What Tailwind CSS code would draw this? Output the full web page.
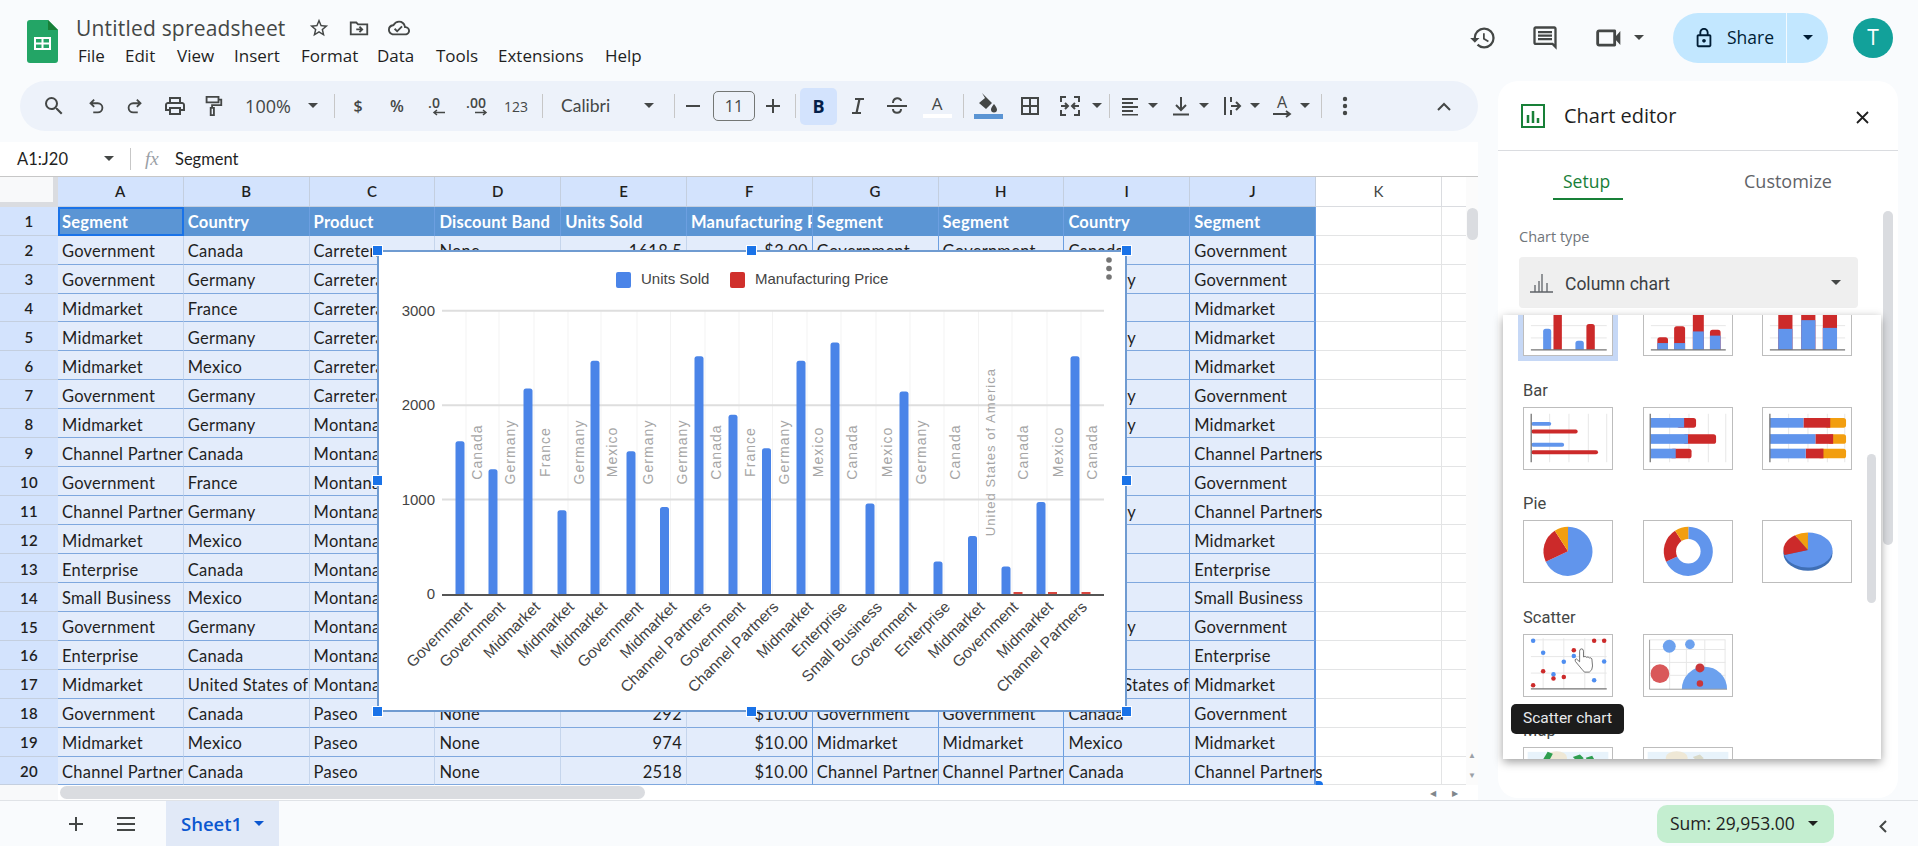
<!DOCTYPE html>
<html lang="en">
<head>
<meta charset="UTF-8">
<title>Untitled spreadsheet</title>
<script src="https://cdn.jsdelivr.net/npm/@tailwindcss/browser@4"></script>
</head>
<body class="font-['Open_Sans',sans-serif]">
<div class="relative w-[1920px] h-[846px] overflow-hidden bg-[#f9fbfd] border-r-2 border-white flex flex-col text-[#444746]">

  <!-- title bar -->
  <header class="h-[81px] shrink-0 flex items-start">
    <svg class="ml-[27px] mt-[20px] shrink-0" width="31" height="43" viewBox="0 0 31 43">
      <path d="M3 0h18l10 10v30a3 3 0 0 1-3 3H3a3 3 0 0 1-3-3V3a3 3 0 0 1 3-3z" fill="#23a566"/>
      <path d="M21 0l10 10H21z" fill="#188038"/>
      <path d="M7 17h17v13H7z M9 19v3.5h5.5V19z M16.5 19v3.5H22V19z M9 24.5V28h5.5v-3.5z M16.5 24.5V28H22v-3.5z" fill="#fff" fill-rule="evenodd"/>
    </svg>
    <div class="ml-[18px] mt-[14px]">
      <div class="flex items-center h-[28px]">
        <span class="text-[21px] tracking-[0.2px] leading-[28px] w-[210px] whitespace-nowrap">Untitled spreadsheet</span>
        <svg class="ml-[22px]" width="22" height="22" viewBox="0 0 24 24" fill="#444746"><path d="M22 9.24l-7.19-.62L12 2 9.19 8.63 2 9.24l5.46 4.73L5.82 21 12 17.27 18.18 21l-1.63-7.03L22 9.24zM12 15.4l-3.76 2.27 1-4.28-3.32-2.88 4.38-.38L12 6.1l1.71 4.04 4.38.38-3.32 2.88 1 4.28L12 15.4z"/></svg>
        <svg class="ml-[17px]" width="24" height="22" viewBox="0 0 24 24" fill="none" stroke="#444746" stroke-width="2"><path d="M3 6h6l2 2h10v11H3z"/><path d="M9 13.500h6M12.500 10.500l3 3-3 3"/></svg>
        <svg class="ml-[16px]" width="24" height="22" viewBox="0 0 24 24" fill="#444746"><path d="M19.350 10.040A7.490 7.490 0 0 0 12 4C9.110 4 6.600 5.640 5.350 8.040A5.994 5.994 0 0 0 0 14c0 3.310 2.690 6 6 6h13c2.760 0 5-2.240 5-5 0-2.640-2.050-4.780-4.650-4.960zM19 18H6c-2.210 0-4-1.790-4-4 0-2.050 1.530-3.760 3.560-3.970l1.070-.11.5-.95A5.469 5.469 0 0 1 12 6c2.620 0 4.880 1.860 5.390 4.430l.3 1.500 1.530.11A2.980 2.980 0 0 1 22 15c0 1.650-1.350 3-3 3zm-9-3.820l-2.090-2.090L6.500 13.500 10 17l6.010-6.010-1.410-1.410z"/></svg>
      </div>
      <nav class="flex gap-[20px] ml-[2px] mt-[2px] text-[17px] leading-[24px] text-[#1f1f1f] whitespace-nowrap">
        <span class="w-[27px]">File</span><span class="w-[32px]">Edit</span><span class="w-[37px]">View</span><span class="w-[47px]">Insert</span><span class="w-[56px]">Format</span><span class="w-[39px]">Data</span><span class="w-[42px]">Tools</span><span class="w-[87px]">Extensions</span><span class="w-[36px]">Help</span>
      </nav>
    </div>
    <div class="ml-auto flex items-center h-[75px] pr-[25px]">
      <svg width="28" height="28" viewBox="0 0 24 24" fill="#444746"><path d="M13 3a9 9 0 0 0-9 9H1l3.890 3.890.07.14L9 12H6c0-3.870 3.130-7 7-7s7 3.130 7 7-3.130 7-7 7c-1.930 0-3.680-.79-4.940-2.060l-1.420 1.420A8.954 8.954 0 0 0 13 21a9 9 0 0 0 0-18zm-1 5v5l4.280 2.540.72-1.210-3.500-2.080V8H12z"/></svg>
      <svg class="ml-[34px]" width="28" height="28" viewBox="0 0 24 24" fill="#444746"><path d="M21.990 4c0-1.100-.89-2-1.990-2H4c-1.100 0-2 .9-2 2v12c0 1.100.9 2 2 2h14l4 4-.01-18zM20 4v13.170L18.830 16H4V4h16zM6 12h12v2H6zm0-3h12v2H6zm0-3h12v2H6z"/></svg>
      <svg class="ml-[33px]" width="34" height="34" viewBox="0 0 24 24" fill="#444746"><path d="M17 10.500V7c0-.55-.45-1-1-1H5C3.900 6 3 6.900 3 8v8c0 1.100.9 2 2 2h11c.55 0 1-.45 1-1v-3.500l3 3.500v-10l-3 3.500zM15 16H5V8h10v8z"/></svg>
      <svg class="ml-[8px]" width="10" height="6" viewBox="0 0 10 6" fill="#444746"><path d="M0 0h10L5 5z"/></svg>
      <div class="ml-[29px] w-[155px] h-[50px] rounded-full bg-[#c2e7ff] flex items-center text-[#001d35]">
        <svg class="ml-[20px]" width="22" height="22" viewBox="0 0 24 24" fill="#001d35"><path d="M18 8h-1V6c0-2.760-2.240-5-5-5S7 3.240 7 6v2H6c-1.100 0-2 .9-2 2v10c0 1.100.9 2 2 2h12c1.100 0 2-.9 2-2V10c0-1.100-.9-2-2-2zM9 6c0-1.660 1.340-3 3-3s3 1.340 3 3v2H9V6zm9 14H6V10h12v10zm-6-3c1.100 0 2-.9 2-2s-.9-2-2-2-2 .9-2 2 .9 2 2 2z"/></svg>
        <span class="ml-[12px] w-[49px] text-[17.500px] font-medium whitespace-nowrap">Share</span>
        <span class="ml-[10px] w-px h-[50px] bg-white/80"></span>
        <svg class="ml-[16px]" width="10" height="6" viewBox="0 0 10 6" fill="#001d35"><path d="M0 0h10L5 5z"/></svg>
      </div>
      <div class="ml-[25px] w-[40px] h-[40px] rounded-full bg-[#12a19a] text-white flex items-center justify-center text-[21px]">T</div>
    </div>
  </header>

  <!-- main area -->
  <div class="flex flex-1 min-h-0">
    <div class="w-[1478px] shrink-0 flex flex-col">
      <!-- toolbar -->
      <div class="ml-[20px] h-[50px] rounded-full bg-[#edf2fa] flex items-center shrink-0 text-[#444746]">
        <span class="ml-[14px] w-[40px] flex justify-center"><svg width="24" height="24" viewBox="0 0 24 24" fill="#444746"><path d="M15.500 14h-.79l-.28-.27A6.471 6.471 0 0 0 16 9.500 6.500 6.500 0 1 0 9.500 16c1.610 0 3.090-.59 4.230-1.570l.27.28v.79l5 4.990L20.490 19l-4.990-5zm-6 0C7.010 14 5 11.990 5 9.500S7.010 5 9.500 5 14 7.010 14 9.500 11.990 14 9.500 14z"/></svg></span>
        <span class="w-[44px] flex justify-center"><svg width="22" height="22" viewBox="0 0 24 24" fill="none" stroke="#444746" stroke-width="2"><path d="M10 5 6 9l4 4M6 9h8a5 5 0 0 1 0 10H9"/></svg></span>
        <span class="w-[34px] flex justify-center"><svg width="22" height="22" viewBox="0 0 24 24" fill="none" stroke="#444746" stroke-width="2"><path d="M14 5l4 4-4 4M18 9h-8a5 5 0 0 0 0 10h5"/></svg></span>
        <span class="w-[46px] flex justify-center"><svg width="24" height="24" viewBox="0 0 24 24" fill="#444746"><path d="M19 8h-1V3H6v5H5c-1.660 0-3 1.340-3 3v6h4v4h12v-4h4v-6c0-1.660-1.340-3-3-3zM8 5h8v3H8V5zm8 12v2H8v-4h8v2zm2-2v-2H6v2H4v-4c0-.55.45-1 1-1h14c.55 0 1 .45 1 1v4h-2z"/></svg></span>
        <span class="w-[30px] flex justify-center"><svg width="22" height="24" viewBox="0 0 24 24" fill="none" stroke="#444746" stroke-width="2"><path d="M5 2h13v6H5zM18 5h3v6H11v3M9.500 14h3.500v8H9.500z"/></svg></span>
        <span class="w-[80px] text-center text-[18px]">100%</span>
        <svg width="10" height="6" viewBox="0 0 10 6" fill="#444746"><path d="M0 0h10L5 5z"/></svg>
        <span class="ml-[16px] w-px h-[24px] bg-[#c7c7c7]"></span>
        <span class="w-[46px] text-center text-[16px] font-semibold">$</span>
        <span class="w-[32px] text-center text-[16px] font-semibold">%</span>
        <span class="w-[42px] flex flex-col items-center text-[14px] font-semibold leading-[13px]">.0<svg width="14" height="7" viewBox="0 0 14 7" class="ml-[10px]" fill="none" stroke="#444746" stroke-width="1.500"><path d="M13 3.500H2M5 1 2 3.500 5 6"/></svg></span>
        <span class="w-[42px] flex flex-col items-center text-[14px] font-semibold leading-[13px]">.00<svg width="14" height="7" viewBox="0 0 14 7" class="ml-[10px]" fill="none" stroke="#444746" stroke-width="1.500"><path d="M1 3.500h11M9 1l3 2.500L9 6"/></svg></span>
        <span class="w-[38px] text-center text-[14px]">123</span>
        <span class="ml-[7px] w-px h-[24px] bg-[#c7c7c7]"></span>
        <span class="ml-[18px] w-[83px] text-[17.500px] font-['Lato',sans-serif]">Calibri</span>
        <svg width="10" height="6" viewBox="0 0 10 6" fill="#444746"><path d="M0 0h10L5 5z"/></svg>
        <span class="ml-[20px] w-px h-[24px] bg-[#c7c7c7]"></span>
        <span class="w-[36px] flex justify-center"><span class="w-[14px] h-[2px] bg-[#444746]"></span></span>
        <span class="ml-[2px] w-[42px] h-[30px] rounded-[5px] border border-[#747775] flex items-center justify-center text-[16px]">11</span>
        <span class="w-[36px] flex justify-center"><svg width="16" height="16" viewBox="0 0 16 16" fill="#444746"><path d="M7 1h2v6h6v2H9v6H7V9H1V7h6z"/></svg></span>
        <span class="ml-[4px] w-px h-[24px] bg-[#c7c7c7]"></span>
        <span class="ml-[4px] w-[37px] h-[37px] rounded-[5px] bg-[#d3e3fd] flex items-center justify-center text-[18px] font-bold text-[#041e49]">B</span>
        <span class="w-[42px] flex justify-center"><svg width="20" height="20" viewBox="0 0 20 20" fill="none" stroke="#444746" stroke-width="2.200"><path d="M7 3h9M4 17h9M11.500 3l-3 14"/></svg></span>
        <span class="w-[36px] flex justify-center"><svg width="22" height="22" viewBox="0 0 22 22" fill="none" stroke="#444746" stroke-width="2"><path d="M1 11h20M7 8c0-6 8-6 8-2M7 14c0 5 8 5 8 0"/></svg></span>
        <span class="w-[44px] flex flex-col items-center text-[17px] leading-[20px]">A<span class="w-[29px] h-[4px] bg-white"></span></span>
        <span class="ml-[4px] w-px h-[24px] bg-[#c7c7c7]"></span>
        <span class="w-[48px] flex flex-col items-center"><svg width="22" height="20" viewBox="0 0 22 20" fill="#444746"><path d="M5 0l10 10-6 6-7-6 6-5zM17 11s3 3.500 3 5.500a3 3 0 0 1-6 0C14 14.500 17 11 17 11z"/></svg><span class="w-[29px] h-[5px] bg-[#5a94d3] mt-[1px]"></span></span>
        <span class="w-[36px] flex justify-center"><svg width="20" height="20" viewBox="0 0 20 20" fill="none" stroke="#444746" stroke-width="2"><path d="M2 2h16v16H2zM10 2v16M2 10h16"/></svg></span>
        <span class="w-[44px] flex justify-center"><svg width="22" height="22" viewBox="0 0 22 22" fill="none" stroke="#444746" stroke-width="2"><path d="M7 2H2v5M15 2h5v5M7 20H2v-5M15 20h5v-5M2 11h7M6 8l3 3-3 3M20 11h-7M16 8l-3 3 3 3"/></svg></span>
        <svg width="10" height="6" viewBox="0 0 10 6" fill="#444746"><path d="M0 0h10L5 5z"/></svg>
        <span class="ml-[7px] w-px h-[24px] bg-[#c7c7c7]"></span>
        <span class="ml-[2px] w-[36px] flex justify-center"><svg width="20" height="20" viewBox="0 0 20 20" fill="#444746"><path d="M2 2h16v2H2zM2 6h11v2H2zM2 10h16v2H2zM2 14h11v2H2zM2 18h16v1.500H2z"/></svg></span>
        <svg width="10" height="6" viewBox="0 0 10 6" fill="#444746"><path d="M0 0h10L5 5z"/></svg>
        <span class="ml-[5px] w-[36px] flex justify-center"><svg width="20" height="20" viewBox="0 0 20 20" fill="none" stroke="#444746" stroke-width="2"><path d="M10 1v13M5 9l5 5 5-5M2 18.500h16"/></svg></span>
        <svg width="10" height="6" viewBox="0 0 10 6" fill="#444746"><path d="M0 0h10L5 5z"/></svg>
        <span class="ml-[5px] w-[36px] flex justify-center"><svg width="20" height="20" viewBox="0 0 20 20" fill="none" stroke="#444746" stroke-width="2"><path d="M3 1v18M9 1v5M9 14v5M9 10h9M14 6l4 4-4 4"/></svg></span>
        <svg width="10" height="6" viewBox="0 0 10 6" fill="#444746"><path d="M0 0h10L5 5z"/></svg>
        <span class="ml-[4px] w-[36px] flex flex-col items-center text-[16px] leading-[16px]">A<svg width="20" height="8" viewBox="0 0 20 8" fill="none" stroke="#444746" stroke-width="1.800"><path d="M1 4h17M14 1l4 3-4 3"/></svg></span>
        <svg width="10" height="6" viewBox="0 0 10 6" fill="#444746"><path d="M0 0h10L5 5z"/></svg>
        <span class="ml-[11px] w-px h-[24px] bg-[#c7c7c7]"></span>
        <span class="w-[46px] flex justify-center"><svg width="6" height="20" viewBox="0 0 6 20" fill="#444746"><circle cx="3" cy="3" r="2.200"/><circle cx="3" cy="10" r="2.200"/><circle cx="3" cy="17" r="2.200"/></svg></span>
        <svg class="ml-auto mr-[27px]" width="14" height="9" viewBox="0 0 14 9" fill="none" stroke="#444746" stroke-width="2"><path d="M1 8l6-6 6 6"/></svg>
      </div>

      <!-- formula bar -->
      <div class="mt-[11px] h-[35px] shrink-0 bg-white border-b border-[#c7c7c7] flex items-center text-[#1f1f1f] font-['Lato',sans-serif] text-[16.500px]">
        <span class="ml-[17px] w-[87px]">A1:J20</span>
        <svg width="10" height="6" viewBox="0 0 10 6" fill="#444746"><path d="M0 0h10L5 5z"/></svg>
        <span class="ml-[16px] w-px h-[22px] bg-[#c7c7c7]"></span>
        <span class="ml-[14px] w-[30px] text-[#9aa0a6] italic font-['Liberation_Serif',serif] text-[19px]">fx</span>
        <span>Segment</span>
      </div>

      <!-- sheet -->
      <div class="flex h-[608px] shrink-0 overflow-hidden">
        <div id="sheet" class="w-[1466px] shrink-0 grid grid-cols-[58px_repeat(10,125.8px)_126px_24px] grid-rows-[29.700px_repeat(20,28.950px)] font-['Lato',sans-serif] text-[16.500px] tracking-[0.25px] text-[#1f1f1f]"></div>
        <div class="w-[12px] shrink-0 bg-[#fbfbfb] flex flex-col items-center relative">
          <span class="mt-[31px] w-[11px] h-[32px] rounded-full bg-[#dadce0]"></span>
          <span class="absolute top-[568px] text-[8px] leading-[20px] text-[#9aa0a6]">▲</span>
          <span class="absolute top-[588px] text-[8px] leading-[20px] text-[#9aa0a6]">▼</span>
        </div>
      </div>
      <div class="h-[15px] shrink-0 bg-white flex items-center relative">
        <span class="w-[58px] h-full bg-[#f8f9fa]"></span>
        <span class="ml-[2px] w-[585px] h-[13px] rounded-full bg-[#dadce0]"></span>
        <span class="absolute left-[1430px] text-[8px] text-[#80868b]">◀</span>
        <span class="absolute left-[1452px] text-[8px] text-[#80868b]">▶</span>
      </div>
    </div>

    <!-- chart editor -->
    <aside class="ml-[20px] w-[400px] h-[717px] bg-white rounded-[20px] relative shrink-0 text-[#1f1f1f]">
      <div class="h-[70px] border-b border-[#dadce0] flex items-center">
        <svg class="ml-[23px]" width="24" height="24" viewBox="0 0 24 24" fill="none" stroke="#188038" stroke-width="2"><path d="M1 1h22v22H1z"/><path d="M7 11v8M12 7v12M17 14v5" stroke-width="2.500"/></svg>
        <span class="ml-[19px] text-[20px] whitespace-nowrap">Chart editor</span>
        <svg class="ml-auto mr-[29px] mt-[4px]" width="13" height="13" viewBox="0 0 13 13" fill="none" stroke="#1f1f1f" stroke-width="1.800"><path d="M1 1l11 11M12 1 1 12"/></svg>
      </div>
      <div class="flex h-[50px] relative">
        <span class="ml-[65px] mt-[18px] text-[17.500px] font-medium text-[#188038] leading-[24px]">Setup</span>
        <span class="absolute left-[55px] top-[47px] w-[70px] h-[2px] bg-[#188038]"></span>
        <span class="absolute left-[246px] top-[18px] text-[18px] font-medium text-[#5f6368] leading-[24px] whitespace-nowrap">Customize</span>
      </div>
      <div class="ml-[21px] mt-[26px] text-[14.500px] leading-[20px] text-[#70757a]">Chart type</div>
      <div class="ml-[21px] mt-[10px] w-[339px] h-[51px] rounded-[4px] bg-[#efefef] flex items-center">
        <svg class="ml-[11px]" width="23" height="20" viewBox="0 0 23 20" fill="none" stroke="#5f6368" stroke-width="1.300"><path d="M0 19h23M5 12v7M9 8v11M12 1v18M17 10v9"/></svg>
        <span class="ml-[12px] pt-[3px] text-[17.500px] font-['Roboto',sans-serif] text-[#3c4043] whitespace-nowrap">Column chart</span>
        <svg class="ml-auto mr-[17px]" width="10" height="6" viewBox="0 0 10 6" fill="#444746"><path d="M0 0h10L5 5z"/></svg>
      </div>
      <span class="absolute left-[385px] top-[130px] w-[10px] h-[334px] rounded-full bg-[#dadce0]"></span>

      <!-- chart type popup -->
      <div class="absolute left-[5px] top-[234px] w-[378px] h-[444px] bg-white overflow-hidden shadow-[0_3px_9px_rgba(0,0,0,0.38)]">
        <div class="pl-[20px] -mt-[22px] text-[16.500px] leading-[18px] text-[#444746] font-['Roboto',sans-serif]">
          <div class="grid grid-cols-[90px_90px_90px] gap-x-[29.500px]">
            <div class="h-[63px] border border-[#bdbdbd] ring-[5px] ring-[#c6d8f6]"><svg class="w-full h-full" viewBox="0 0 270 189"><path d="M20 98h235M20 136h235" stroke="#e6e6e6" stroke-width="3"/><rect x="58" y="108" width="25" height="72" rx="8" fill="#6195ec"/><rect x="90" y="40" width="26" height="140" rx="8" fill="#cc2a2a"/><rect x="158" y="145" width="26" height="35" rx="8" fill="#6195ec"/><rect x="192" y="93" width="26" height="87" rx="8" fill="#cc2a2a"/><rect x="0" y="173" width="270" height="14" fill="#fff"/><path d="M20 173h235" stroke="#757575" stroke-width="4"/></svg></div>
            <div class="h-[63px] border border-[#bdbdbd]"><svg class="w-full h-full" viewBox="0 0 270 189"><path d="M20 98h232M20 136h232" stroke="#e6e6e6" stroke-width="3"/><rect x="40" y="134" width="33" height="46" rx="8" fill="#cc2a2a"/><rect x="40" y="152" width="33" height="28" fill="#6195ec"/><rect x="92" y="100" width="34" height="80" rx="8" fill="#cc2a2a"/><rect x="92" y="152" width="34" height="28" fill="#6195ec"/><rect x="150" y="40" width="34" height="140" rx="8" fill="#cc2a2a"/><rect x="150" y="116" width="34" height="64" fill="#6195ec"/><rect x="203" y="111" width="33" height="69" rx="8" fill="#cc2a2a"/><rect x="203" y="129" width="33" height="51" fill="#6195ec"/><rect x="0" y="173" width="270" height="14" fill="#fff"/><path d="M20 173h232" stroke="#757575" stroke-width="4"/></svg></div>
            <div class="h-[63px] border border-[#bdbdbd]"><svg class="w-full h-full" viewBox="0 0 270 189"><path d="M20 98h233M20 136h233" stroke="#e6e6e6" stroke-width="3"/><rect x="46" y="40" width="44" height="133" fill="#cc2a2a"/><rect x="46" y="108" width="44" height="65" fill="#6195ec"/><rect x="117" y="40" width="44" height="133" fill="#cc2a2a"/><rect x="117" y="81" width="44" height="92" fill="#6195ec"/><rect x="184" y="40" width="44" height="133" fill="#cc2a2a"/><rect x="184" y="105" width="44" height="68" fill="#6195ec"/><path d="M20 173h233" stroke="#757575" stroke-width="4"/></svg></div>
          </div>

          <div class="h-[51px] pt-[26px]">Bar</div>
          <div class="grid grid-cols-[90px_90px_90px] gap-x-[29.500px]">
            <div class="h-[63px] border border-[#bdbdbd]"><svg class="w-full h-full" viewBox="0 0 270 189"><path d="M78 18v150M138 18v150M198 18v150M255 18v150" stroke="#e6e6e6" stroke-width="3"/><rect x="21" y="43" width="62" height="12" rx="6" fill="#6195ec"/><rect x="21" y="67" width="144" height="12" rx="6" fill="#cc2a2a"/><rect x="21" y="108" width="102" height="12" rx="6" fill="#6195ec"/><rect x="21" y="131" width="207" height="12" rx="6" fill="#cc2a2a"/><path d="M21 18v150" stroke="#757575" stroke-width="4"/></svg></div>
            <div class="h-[63px] border border-[#bdbdbd]"><svg class="w-full h-full" viewBox="0 0 270 189"><path d="M78 18v150M138 18v150M198 18v150M252 18v150" stroke="#e6e6e6" stroke-width="3"/><rect x="100" y="31" width="60" height="30" rx="8" fill="#cc2a2a"/><rect x="18" y="31" width="105" height="30" fill="#6195ec"/><rect x="120" y="81" width="102" height="30" rx="8" fill="#cc2a2a"/><rect x="18" y="81" width="117" height="30" fill="#6195ec"/><rect x="80" y="126" width="66" height="30" rx="8" fill="#cc2a2a"/><rect x="18" y="126" width="79" height="30" fill="#6195ec"/><path d="M18 18v150" stroke="#757575" stroke-width="4"/></svg></div>
            <div class="h-[63px] border border-[#bdbdbd]"><svg class="w-full h-full" viewBox="0 0 270 189"><path d="M78 18v150M138 18v150M198 18v150M252 18v150" stroke="#e6e6e6" stroke-width="3"/><rect x="190" y="31" width="66" height="30" rx="8" fill="#f29e0f"/><rect x="124" y="31" width="83" height="30" fill="#cc2a2a"/><rect x="20" y="31" width="104" height="30" fill="#6195ec"/><rect x="200" y="81" width="56" height="30" rx="8" fill="#f29e0f"/><rect x="161" y="81" width="55" height="30" fill="#cc2a2a"/><rect x="20" y="81" width="141" height="30" fill="#6195ec"/><rect x="170" y="126" width="86" height="30" rx="8" fill="#f29e0f"/><rect x="131" y="126" width="55" height="30" fill="#cc2a2a"/><rect x="20" y="126" width="111" height="30" fill="#6195ec"/><path d="M20 18v150" stroke="#757575" stroke-width="4"/></svg></div>
          </div>

          <div class="h-[50px] pt-[25px]">Pie</div>
          <div class="grid grid-cols-[90px_90px_90px] gap-x-[29.500px]">
            <div class="h-[63px] border border-[#bdbdbd]"><svg class="w-full h-full" viewBox="0 0 270 189"><path d="M135 94 135 18A76 76 0 1 1 66 126Z" fill="#6195ec"/><path d="M135 94 66 126A76 76 0 0 1 94 30Z" fill="#cc2a2a"/><path d="M135 94 94 30A76 76 0 0 1 135 18Z" fill="#f29e0f"/></svg></div>
            <div class="h-[63px] border border-[#bdbdbd]"><svg class="w-full h-full" viewBox="0 0 270 189"><path d="M136 94 136 18A76 76 0 1 1 67 126Z" fill="#6195ec"/><path d="M136 94 67 126A76 76 0 0 1 95 30Z" fill="#cc2a2a"/><path d="M136 94 95 30A76 76 0 0 1 136 18Z" fill="#f29e0f"/><circle cx="136" cy="94" r="38" fill="#fff"/></svg></div>
            <div class="h-[63px] border border-[#bdbdbd]"><svg class="w-full h-full" viewBox="0 0 270 189"><ellipse cx="138" cy="100" rx="76" ry="54" fill="#3f6fb5"/><path d="M138 90 138 36A76 54 0 1 1 65 105Z" fill="#6195ec"/><path d="M138 90 65 105A76 54 0 0 1 98 44Z" fill="#cc2a2a"/><path d="M138 90 98 44A76 54 0 0 1 138 36Z" fill="#f29e0f"/></svg></div>
          </div>

          <div class="h-[51px] pt-[26px]">Scatter</div>
          <div class="grid grid-cols-[90px_90px_90px] gap-x-[29.500px]">
            <div class="h-[63px] border border-[#bdbdbd]"><svg class="w-full h-full" viewBox="0 0 270 189"><path d="M58 10v157M122 10v157M187 10v157M250 10v157M20 15h235M20 67h235M20 118h235" stroke="#e6e6e6" stroke-width="3"/><g fill="#4f8ef0"><circle cx="27" cy="18" r="7"/><circle cx="58" cy="55" r="7"/><circle cx="122" cy="83" r="7"/><circle cx="153" cy="65" r="7"/><circle cx="247" cy="82" r="7"/><circle cx="90" cy="122" r="7"/><circle cx="216" cy="140" r="7"/></g><g fill="#cc2a2a"><circle cx="216" cy="18" r="7"/><circle cx="247" cy="18" r="7"/><circle cx="153" cy="47" r="7"/><circle cx="58" cy="112" r="7"/><circle cx="122" cy="130" r="7"/><circle cx="90" cy="135" r="7"/><circle cx="27" cy="156" r="7"/></g><path d="M20 167h235" stroke="#757575" stroke-width="4"/><path d="M178 106 158 82q-4-7 3-8l10 9V50q0-7 6-7t6 7v18q6-4 9 1 6-3 9 2 6-2 8 3l2 22q0 14-10 19h-15z" fill="#fff" stroke="#555" stroke-width="2.500"/></svg></div>
            <div class="h-[63px] border border-[#bdbdbd]"><svg class="w-full h-full" viewBox="0 0 270 189"><path d="M78 15v153M130 15v153M187 15v153M250 15v153M16 15h235M16 45h235M16 85h235M16 125h235" stroke="#e6e6e6" stroke-width="3"/><circle cx="77" cy="35" r="20" fill="#6ca1ee"/><circle cx="141" cy="29" r="15" fill="#6ca1ee"/><path d="M116 168a70 70 0 0 1 140 0z" fill="#6ca1ee"/><circle cx="48" cy="120" r="29" fill="#d9585a"/><circle cx="172" cy="102" r="14" fill="#c9363a"/><circle cx="172" cy="150" r="10" fill="#c9363a"/><path d="M16 15v153h240" fill="none" stroke="#9e9e9e" stroke-width="3"/></svg></div>
          </div>

          <div class="h-[50px] pt-[25px]">Map</div>
          <div class="grid grid-cols-[90px_90px_90px] gap-x-[29.500px]">
            <div class="h-[63px] border border-[#bdbdbd]"><svg class="w-full h-full" viewBox="0 0 270 189"><rect x="10" y="12" width="250" height="170" fill="#e8f3fb"/><ellipse cx="100" cy="30" rx="32" ry="20" fill="#efe8d6"/><path d="M55 40 72 12l16 6-14 26z" fill="#2f9e4f"/><path d="M150 28l22-8 12 12-20 10zM190 30l20-6 8 14-20 6z" fill="#2f9e4f"/></svg></div>
            <div class="h-[63px] border border-[#bdbdbd]"><svg class="w-full h-full" viewBox="0 0 270 189"><rect x="10" y="12" width="250" height="170" fill="#e8f3fb"/><ellipse cx="100" cy="30" rx="34" ry="20" fill="#efe8d6"/><path d="M150 28l22-8 12 12-20 10z" fill="#d9d9c8"/></svg></div>
          </div>
        </div>
        <div class="absolute left-[364px] top-[139px] w-[9px] h-[149px] rounded-full bg-[#dadce0]"></div>
      </div>

      <!-- tooltip -->
      <div class="absolute left-[13px] top-[623px] w-[113px] h-[30px] rounded-[5px] bg-[#1c1c1c] text-[#e8eaed] text-[15.500px] flex items-center justify-center whitespace-nowrap font-['Roboto',sans-serif]">Scatter chart</div>
    </aside>
  </div>

  <!-- sheet tabs -->
  <footer class="h-[46px] shrink-0 border-t border-[#e0e3e7] flex items-center bg-[#f9fbfd]">
    <svg class="ml-[69px]" width="14" height="14" viewBox="0 0 14 14" fill="#444746"><path d="M6 0h2v6h6v2H8v6H6V8H0V6h6z"/></svg>
    <svg class="ml-[34px]" width="18" height="14" viewBox="0 0 18 14" fill="#444746"><path d="M0 0h18v2H0zM0 6h18v2H0zM0 12h18v2H0z"/></svg>
    <div class="ml-[31px] w-[113px] h-full bg-[#e1e9f7] flex items-center text-[#0b57d0]">
      <span class="ml-[15px] w-[73px] text-[18.500px] font-semibold">Sheet1</span>
      <svg width="10" height="6" viewBox="0 0 10 6" fill="#0b57d0"><path d="M0 0h10L5 5z"/></svg>
    </div>
    <div class="ml-auto mr-[84px] w-[177px] h-[38px] rounded-[10px] bg-[#c4eed0] flex items-center text-[#1f1f1f] text-[17.500px] whitespace-nowrap">
      <span class="ml-[13px] w-[132px]">Sum: 29,953.00</span>
      <svg class="ml-[6px]" width="10" height="6" viewBox="0 0 10 6" fill="#1f1f1f"><path d="M0 0h10L5 5z"/></svg>
    </div>
    <svg class="absolute left-[1879px] top-[820px]" width="8" height="13" viewBox="0 0 8 13" fill="none" stroke="#444746" stroke-width="2"><path d="M7 1 1.500 6.500 7 12"/></svg>
  </footer>

  <!-- floating chart -->
  <div class="absolute left-[377px] top-[250px] w-[750px] h-[462px] bg-white border-2 border-[#6f9bd1]">
    <svg id="chart" class="absolute -left-[2px] -top-[2px]" width="750" height="462" viewBox="377 250 750 462"></svg>
  </div>
  <span class="absolute left-[372px] top-[245px] w-[11px] h-[11px] bg-[#1a73e8] border border-white"></span>
  <span class="absolute left-[746px] top-[245px] w-[11px] h-[11px] bg-[#1a73e8] border border-white"></span>
  <span class="absolute left-[1121px] top-[245px] w-[11px] h-[11px] bg-[#1a73e8] border border-white"></span>
  <span class="absolute left-[372px] top-[475px] w-[11px] h-[11px] bg-[#1a73e8] border border-white"></span>
  <span class="absolute left-[1121px] top-[475px] w-[11px] h-[11px] bg-[#1a73e8] border border-white"></span>
  <span class="absolute left-[372px] top-[706px] w-[11px] h-[11px] bg-[#1a73e8] border border-white"></span>
  <span class="absolute left-[746px] top-[706px] w-[11px] h-[11px] bg-[#1a73e8] border border-white"></span>
  <span class="absolute left-[1121px] top-[706px] w-[11px] h-[11px] bg-[#1a73e8] border border-white"></span>
  <span class="absolute left-[1309px] top-[781px] w-[14px] h-[4px] rounded-t-full bg-[#1a73e8]"></span>
</div>

<script>
  // [segment, country, product, units, price]
  var rows = [
    ['Government','Canada','Carretera','1618.5','$3.00'],
    ['Government','Germany','Carretera','1321','$3.00'],
    ['Midmarket','France','Carretera','2178','$3.00'],
    ['Midmarket','Germany','Carretera','888','$3.00'],
    ['Midmarket','Mexico','Carretera','2470','$3.00'],
    ['Government','Germany','Carretera','1513','$3.00'],
    ['Midmarket','Germany','Montana','921','$5.00'],
    ['Channel Partners','Canada','Montana','2518','$5.00'],
    ['Government','France','Montana','1899','$5.00'],
    ['Channel Partners','Germany','Montana','1545','$5.00'],
    ['Midmarket','Mexico','Montana','2470','$5.00'],
    ['Enterprise','Canada','Montana','2665.5','$5.00'],
    ['Small Business','Mexico','Montana','958','$5.00'],
    ['Government','Germany','Montana','2146','$5.00'],
    ['Enterprise','Canada','Montana','345','$5.00'],
    ['Midmarket','United States of America','Montana','615','$5.00'],
    ['Government','Canada','Paseo','292','$10.00'],
    ['Midmarket','Mexico','Paseo','974','$10.00'],
    ['Channel Partners','Canada','Paseo','2518','$10.00']
  ];

  var letters = ['A','B','C','D','E','F','G','H','I','J'];
  var html = '<div class="bg-[#f8f9fa] border-r-[5px] border-b-[5px] border-[#dadce0]"></div>';
  letters.forEach(function (l) {
    html += '<div class="flex items-center justify-center bg-[#d3e3fd] border-r border-b border-[#c4cfdf] text-[15px] font-semibold">' + l + '</div>';
  });
  html += '<div class="flex items-center justify-center bg-white border-r border-b border-[#dadce0] text-[15px] text-[#444746]">K</div>';
  html += '<div class="bg-white border-b border-[#dadce0]"></div>';

  function rowHead(n) {
    return '<div class="flex items-center justify-center pt-[2px] bg-[#d3e3fd] border-b border-[#c4cfdf] text-[15px] font-semibold">' + n + '</div>';
  }
  function emptyCells() {
    return '<div class="bg-white border-r border-b border-[#e3e4e5]"></div><div class="bg-white border-b border-[#e3e4e5]"></div>';
  }

  // header row
  var head = ['Segment','Country','Product','Discount Band','Units Sold','Manufacturing Price','Segment','Segment','Country','Segment'];
  html += rowHead(1);
  head.forEach(function (t, i) {
    var active = i === 0 ? ' border-2 border-[#1a73e8] pl-[2px]' : ' pl-[4px] border-r border-[#6c9fe0]';
    html += '<div class="flex items-center pt-[2px] bg-[#5b95d4] text-white font-bold overflow-hidden whitespace-nowrap' + active + '">' + t + '</div>';
  });
  html += emptyCells();

  // data rows, text sits low in the cell like the real sheet
  rows.forEach(function (r, i) {
    var cells = [r[0], r[1], r[2], 'None', r[3], r[4], r[0], r[0], r[1], r[0]];
    html += rowHead(i + 2);
    cells.forEach(function (t, c) {
      var cls;
      if (c === 4 || c === 5) {
        cls = 'flex items-center justify-end pt-[4px] pr-[4px] overflow-hidden whitespace-nowrap border-r border-b bg-[#e3ecfb] border-b-[#7fa8de] ' + (c === 5 ? 'border-r-[#6c9fe0]' : 'border-r-[#c5d5ec]');
      } else if (c === 9) {
        // last column spills into K, so it has to paint above it
        cls = 'relative z-10 flex items-center pt-[4px] pl-[4px] whitespace-nowrap border-r-2 border-b bg-[#e3ecfb] border-b-[#7fa8de] border-r-[#5f94e0]';
      } else {
        cls = 'flex items-center pt-[4px] pl-[4px] overflow-hidden whitespace-nowrap border-r border-b bg-[#e3ecfb] border-b-[#7fa8de] ' + (c >= 6 ? 'border-r-[#6c9fe0]' : 'border-r-[#c5d5ec]');
      }
      html += '<div class="' + cls + '">' + t + '</div>';
    });
    html += emptyCells();
  });
  document.getElementById('sheet').innerHTML = html;

  // chart
  var FONT = "font-family='Liberation Sans, Arial, sans-serif'";
  var svg = '';
  var y0 = 594, k = 0.0944;
  var barX = [460,493,528,562,595,631,664.5,699,733,766.5,801,835,870,904,938,972.5,1006,1041,1075];
  barX.forEach(function (x) {
    svg += "<line x1='" + (x + 6) + "' x2='" + (x + 6) + "' y1='311' y2='594' stroke='#f3f3f3'/>";
  });
  [3000, 2000, 1000].forEach(function (v) {
    var y = y0 - v * k;
    svg += "<line x1='442' x2='1104' y1='" + y + "' y2='" + y + "' stroke='#dedede' stroke-width='2'/>";
  });
  rows.forEach(function (r, i) {
    var x = barX[i], h = parseFloat(r[3]) * k;
    var size = r[1].length > 10 ? 13 : 14;
    svg += "<rect x='" + (x - 4.5) + "' y='" + (y0 - h) + "' width='9' height='" + (h + 4) + "' rx='2.5' fill='#4a84e8'/>";
    svg += "<text transform='translate(" + (x + 22) + ",452) rotate(-90)' text-anchor='middle' font-size='" + size + "' letter-spacing='1.050' fill='#a6a6a6' " + FONT + ">" + r[1] + "</text>";
  });
  svg += "<rect x='442' y='595' width='670' height='4' fill='#fff'/>";
  rows.forEach(function (r, i) {
    svg += "<text transform='translate(" + (barX[i] + 13) + ",608) rotate(-45)' text-anchor='end' font-size='15.500' fill='#444' " + FONT + ">" + r[0] + "</text>";
  });
  [3000, 2000, 1000, 0].forEach(function (v) {
    var y = y0 - v * k;
    svg += "<text x='435' y='" + (y + 5) + "' text-anchor='end' font-size='15' fill='#444' " + FONT + ">" + v + "</text>";
  });
  [1018, 1052.5, 1086].forEach(function (x) {
    svg += "<rect x='" + (x - 4.5) + "' y='592' width='9' height='2' fill='#d9473f'/>";
  });
  svg += "<line x1='442' x2='1104' y1='595' y2='595' stroke='#555' stroke-width='2'/>";
  svg += "<rect x='616' y='272' width='15' height='16' rx='2' fill='#4a84e8'/>";
  svg += "<text x='641' y='284' font-size='15' fill='#444' " + FONT + ">Units Sold</text>";
  svg += "<rect x='730' y='272' width='15' height='16' rx='2' fill='#d0302c'/>";
  svg += "<text x='755' y='284' font-size='15' fill='#444' " + FONT + ">Manufacturing Price</text>";
  [260, 268.5, 277].forEach(function (y) {
    svg += "<circle cx='1109' cy='" + y + "' r='2.800' fill='#757575'/>";
  });
  document.getElementById('chart').innerHTML = svg;
</script>
</body>
</html>
